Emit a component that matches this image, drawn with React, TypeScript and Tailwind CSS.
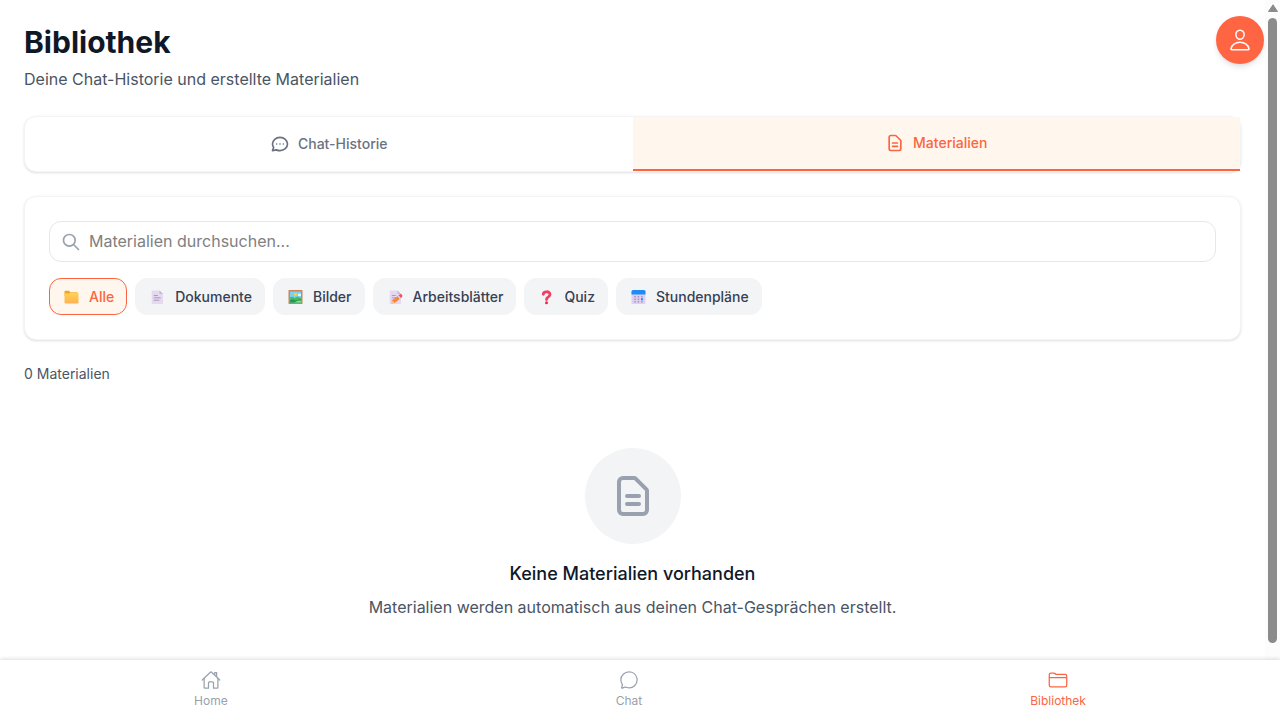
import { useState } from "react";
import type { ReactNode } from "react";
import {
  IoChatbubbleOutline,
  IoFolderOutline,
  IoHomeOutline,
  IoPersonOutline,
} from "react-icons/io5";

const CHAT_PATH =
  "M8 12h.01M12 12h.01M16 12h.01M21 12c0 4.418-4.03 8-9 8a9.863 9.863 0 01-4.255-.949L3 20l1.395-3.72C3.512 15.042 3 13.574 3 12c0-4.418 4.03-8 9-8s9 3.582 9 8z";
const DOCUMENT_PATH =
  "M9 12h6m-6 4h6m2 5H7a2 2 0 01-2-2V5a2 2 0 012-2h5.586a1 1 0 01.707.293l5.414 5.414a1 1 0 01.293.707V19a2 2 0 01-2 2z";
const SEARCH_PATH = "M21 21l-6-6m2-5a7 7 0 11-14 0 7 7 0 0114 0z";

function LineIcon({ path, className }: { path: string; className: string }) {
  return (
    <svg
      className={className}
      fill="none"
      stroke="currentColor"
      strokeWidth={2}
      strokeLinecap="round"
      strokeLinejoin="round"
      viewBox="0 0 24 24"
      aria-hidden="true"
    >
      <path d={path} />
    </svg>
  );
}

function Emoji({ children }: { children: ReactNode }) {
  return (
    <svg className="h-[18px] w-[19px] shrink-0" viewBox="0 0 18 18" aria-hidden="true">
      {children}
    </svg>
  );
}

function FolderEmoji() {
  return (
    <Emoji>
      <defs>
        <linearGradient id="folder" x1="0" y1="0" x2="0" y2="1">
          <stop offset="0" stopColor="#ffd34f" />
          <stop offset="1" stopColor="#ffb155" />
        </linearGradient>
      </defs>
      <path d="M2 3.5a.8.8 0 0 1 .8-.8h3.6l1.5 1.5h7v4H2z" fill="#eda52f" />
      <path d="M2 5.6h4.600l1.400-1h7.200a.8.8 0 0 1 .8.8v9.100a.9.9 0 0 1-.9.9H2.900a.9.9 0 0 1-.9-.9z" fill="url(#folder)" />
    </Emoji>
  );
}

function PageShape() {
  return (
    <>
      <path d="M4 2.5h7l3.5 3.5v9.2a.8.8 0 0 1-.8.8H4a.8.8 0 0 1-.8-.8V3.3a.8.8 0 0 1 .8-.8z" fill="#e5d9ef" />
      <path d="M11 2.5 14.500 6H11.800a.8.8 0 0 1-.8-.8z" fill="#c6b5d8" />
      <path d="M5.300 7.500h4M5.300 9.800h7M5.300 12.200h5.500" stroke="#a99bba" strokeWidth="1" fill="none" />
    </>
  );
}

function DocumentEmoji() {
  return (
    <Emoji>
      <PageShape />
    </Emoji>
  );
}

function PictureEmoji() {
  return (
    <Emoji>
      <rect x="2" y="2" width="14" height="14" rx=".6" fill="#c98657" />
      <rect x="3.500" y="3.500" width="11" height="11" fill="#7fd0f5" />
      <circle cx="9" cy="6.300" r="1.500" fill="#ffd23e" />
      <path d="M11.500 6.500q1.500-1.700 3-.5v2h-3z" fill="#e8f7ff" />
      <path d="M3.500 9.500q2.200-1.800 4.500.6l3-1.600 3.500 1.500v4.500h-11z" fill="#45bd62" />
      <path d="M3.500 12.500q3-2 5.500 0l5.500-1.500v3.500h-11z" fill="#249957" />
      <path d="M8 14.500q4-2.800 6.500-1.700v1.700z" fill="#8be081" />
    </Emoji>
  );
}

function MemoEmoji() {
  return (
    <Emoji>
      <PageShape />
      <path d="M5 15.400l.9-3.200 6.300-5 2.200 2.700-6.300 5z" fill="#ff8237" />
      <path d="M11 8.200l1.300-1 2.200 2.700-1.300 1z" fill="#d9dce6" />
      <path d="M12.200 7.300l.9-.7a1.700 1.700 0 0 1 2.200 2.600l-.9.7z" fill="#f04d68" />
      <path d="M5 15.400l.9-3.200 2.200 2.700z" fill="#f7c298" />
    </Emoji>
  );
}

function QuestionEmoji() {
  return (
    <Emoji>
      <path
        d="M5.800 6.300c0-3.200 6.700-3.600 6.700.2 0 2.500-3.500 2.200-3.500 5"
        stroke="#f43b60"
        strokeWidth="2.800"
        strokeLinecap="round"
        fill="none"
      />
      <circle cx="9" cy="14.700" r="1.500" fill="#ee2a45" />
    </Emoji>
  );
}

function CalendarEmoji() {
  return (
    <Emoji>
      <rect x="2" y="3" width="14" height="13" rx="1.300" fill="#dfcff0" />
      <path d="M2 6.500V3.500A1.500 1.500 0 0 1 3.500 2h11A1.500 1.500 0 0 1 16 3.500v3z" fill="#1f8bf5" />
      <path
        d="M4.800 8h1.500v1.500H4.800zM8.200 8h1.500v1.500H8.200zM11.600 8h1.500v1.500h-1.500zM4.800 10.500h1.500V12H4.800zM8.200 10.500h1.500V12H8.200zM4.800 13h1.500v1.500H4.800zM8.200 13h1.500v1.500H8.200zM11.600 13h1.500v1.500h-1.500z"
        fill="#a495bd"
      />
      <path d="M11.500 10.300h1.900v1.900h-1.900z" fill="#1689f3" />
    </Emoji>
  );
}

const FILTERS = [
  { label: "Alle", Icon: FolderEmoji },
  { label: "Dokumente", Icon: DocumentEmoji },
  { label: "Bilder", Icon: PictureEmoji },
  { label: "Arbeitsblätter", Icon: MemoEmoji },
  { label: "Quiz", Icon: QuestionEmoji },
  { label: "Stundenpläne", Icon: CalendarEmoji },
];

const TABS = [
  { label: "Chat-Historie", path: CHAT_PATH },
  { label: "Materialien", path: DOCUMENT_PATH },
];

const NAV = [
  { label: "Home", Icon: IoHomeOutline, active: false },
  { label: "Chat", Icon: IoChatbubbleOutline, active: false },
  { label: "Bibliothek", Icon: IoFolderOutline, active: true },
];

export default function App() {
  const [tab, setTab] = useState("Materialien");
  const [filter, setFilter] = useState("Alle");

  return (
    <div className="relative flex h-screen flex-col bg-white font-['Inter',sans-serif] text-gray-900">
      <div className="flex min-h-0 flex-1">
        <main className="min-w-0 flex-1 overflow-y-auto p-6 [scrollbar-width:none]">
          <header className="mb-[25px]">
            <h1 className="text-3xl font-bold">Bibliothek</h1>
            <p className="mt-[7px] text-base text-gray-600">Deine Chat-Historie und erstellte Materialien</p>
          </header>

          <div role="tablist" className="mb-6 flex rounded-xl border border-gray-100 bg-white shadow-sm">
            {TABS.map(({ label, path }) => (
              <button
                key={label}
                type="button"
                role="tab"
                aria-selected={tab === label}
                onClick={() => setTab(label)}
                className={
                  tab === label
                    ? "flex flex-1 items-center justify-center gap-2 border-b-2 border-[#fb6542] bg-orange-50 px-6 py-4 text-sm font-medium text-[#fb6542]"
                    : "flex flex-1 items-center justify-center gap-2 px-6 py-4 text-sm font-medium text-gray-500"
                }
              >
                <LineIcon path={path} className="h-5 w-5" />
                {label}
              </button>
            ))}
          </div>

          <section className="mb-6 rounded-xl border border-gray-100 bg-white p-6 shadow-sm">
            <div className="relative mb-4">
              <LineIcon path={SEARCH_PATH} className="absolute top-1/2 left-3 h-5 w-5 -translate-y-1/2 text-gray-400" />
              <input
                type="search"
                aria-label="Materialien durchsuchen"
                placeholder="Materialien durchsuchen..."
                className="block h-[41px] w-full rounded-xl border border-gray-200 pr-4 pb-px pl-[39px] text-base placeholder:text-[#808080]"
              />
            </div>
            <div className="flex flex-wrap gap-2">
              {FILTERS.map(({ label, Icon }) => (
                <button
                  key={label}
                  type="button"
                  aria-pressed={filter === label}
                  onClick={() => setFilter(label)}
                  className={
                    filter === label
                      ? "flex items-center gap-2 rounded-xl border border-[#fb6542] bg-orange-50 px-3 py-2 text-sm/[19px] font-medium text-[#fb6542]"
                      : "flex items-center gap-2 rounded-xl border border-gray-100 bg-gray-100 px-3 py-2 text-sm/[19px] font-medium text-gray-700"
                  }
                >
                  <Icon />
                  {label}
                </button>
              ))}
            </div>
          </section>

          <p className="text-sm text-gray-600">0 Materialien</p>

          <section className="flex flex-col items-center py-16 text-center">
            <div className="mb-4 flex h-24 w-24 items-center justify-center rounded-full bg-gray-100">
              <LineIcon path={DOCUMENT_PATH} className="h-12 w-12 text-gray-400" />
            </div>
            <h2 className="mb-[7px] text-lg font-medium">Keine Materialien vorhanden</h2>
            <p className="text-base text-gray-600">
              Materialien werden automatisch aus deinen Chat-Gesprächen erstellt.
            </p>
          </section>
        </main>

        <div aria-hidden="true" className="flex w-[15px] flex-col items-center bg-[#fcfcfc] pt-1 pb-[17px]">
          <svg className="mb-1.5 h-2 w-2.5" viewBox="0 0 10 8">
            <path d="M5 .8 9.500 7.500H.5z" fill="#8b8b8b" stroke="#8b8b8b" strokeLinejoin="round" />
          </svg>
          <div className="w-[9px] flex-1 rounded-full bg-[#8b8b8b]" />
        </div>
      </div>

      <button
        type="button"
        aria-label="Profil"
        className="absolute top-4 right-4 flex h-12 w-12 items-center justify-center rounded-full bg-[#ff6542] text-white shadow-md"
      >
        <IoPersonOutline className="h-6 w-6" />
      </button>

      <nav className="relative flex h-[60px] shrink-0 items-start justify-around bg-white pt-2.5 shadow-[0_-1px_4px_rgba(0,0,0,0.14)]">
        {NAV.map(({ label, Icon, active }) => (
          <a
            key={label}
            href="#"
            aria-current={active ? "page" : undefined}
            className={
              active
                ? "flex flex-col items-center gap-[3px] text-xs text-[#fb6542]"
                : "flex flex-col items-center gap-[3px] text-xs text-gray-400"
            }
          >
            <Icon className="h-5 w-5" />
            {label}
          </a>
        ))}
      </nav>
    </div>
  );
}
